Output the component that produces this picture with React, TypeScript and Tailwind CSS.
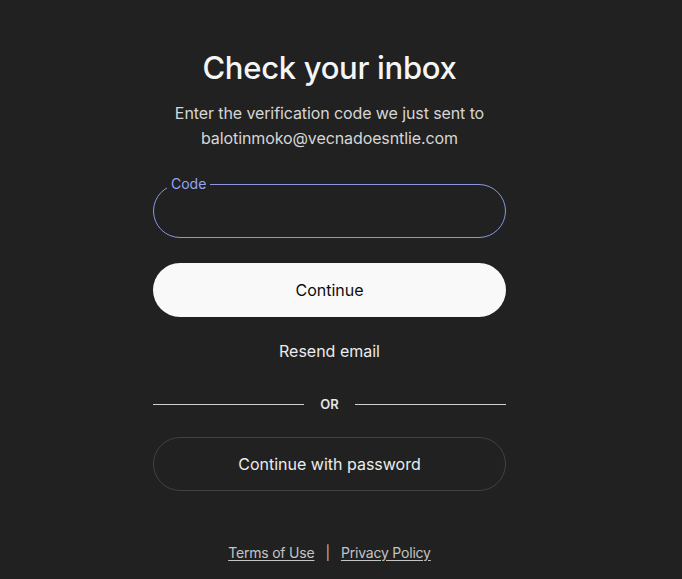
export default function App() {
  return (
    <div
      className="min-h-[579px] w-full bg-[#212121] text-white"
      style={{ fontFamily: "Inter, 'Noto Sans', sans-serif" }}
    >
      <div className="ml-[153px] flex w-[353px] flex-col items-center pt-[47px]">
        <h1 className="text-[31px] font-medium leading-[42px] tracking-[-0.3px] text-[#f5f5f5]">
          Check your inbox
        </h1>
        <p className="mt-[12px] text-center text-[16px] leading-[25px] tracking-[-0.1px] text-[#d6d6d6]">
          Enter the verification code we just sent to
          <br />
          balotinmoko@vecnadoesntlie.com
        </p>

        {/* Code field */}
        <div className="relative mt-[33px] w-full">
          <input
            className="h-[54px] w-full rounded-full border border-[#8a97e0] bg-transparent px-5 text-[16px] text-white outline-none"
            aria-label="Code"
          />
          <span className="absolute left-[14px] top-[-9px] bg-[#212121] px-[4px] text-[14px] leading-[18px] text-[#97a4f0]">
            Code
          </span>
        </div>

        <button className="mt-[25px] h-[54px] w-full rounded-full bg-[#f9f9f9] text-[16px] text-[#0d0d0d]">
          Continue
        </button>

        <button className="mt-[23px] text-[16px] leading-[22px] text-[#ececec]">
          Resend email
        </button>

        {/* Divider */}
        <div className="mt-[33px] flex w-full items-center">
          <div className="h-px flex-1 bg-[#d0d0d0]" />
          <span className="px-[16px] text-[13px] font-semibold leading-[18px] text-[#e5e5e5]">OR</span>
          <div className="h-px flex-1 bg-[#d0d0d0]" />
        </div>

        <button className="mt-[24px] h-[54px] w-full rounded-full border border-[#424242] text-[16px] text-[#ececec]">
          Continue with password
        </button>

        <div className="mt-[51px] flex items-center gap-[11px] text-[14px] tracking-[-0.2px] text-[#c4c4c4]">
          <a className="underline underline-offset-2">Terms of Use</a>
          <span className="text-[#bdbdbd]">|</span>
          <a className="underline underline-offset-2">Privacy Policy</a>
        </div>
      </div>
    </div>
  );
}
